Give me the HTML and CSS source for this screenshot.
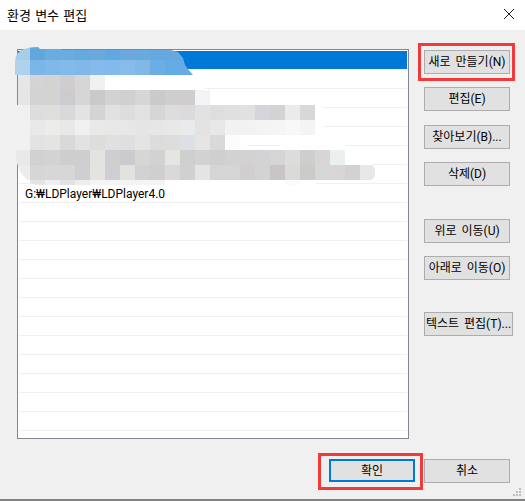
FILE: index.html
```html
<!DOCTYPE html>
<html lang="ko">
<head>
<meta charset="utf-8">
<title>환경 변수 편집</title>
<link rel="stylesheet" href="styles.css">
</head>
<body>
<div class="window">
  <header class="titlebar">
    <span class="title">환경 변수 편집</span>
    <svg class="close" width="10" height="10" viewBox="0 0 10 10"><path d="M0 0L10 10M10 0L0 10" stroke="#1a1a1a" stroke-width="1" fill="none"/></svg>
  </header>
  <div class="content">
    <div class="main">
      <div class="list">
        <div class="row selected"></div>
        <div class="row"></div>
        <div class="row"></div>
        <div class="row"></div>
        <div class="row"></div>
        <div class="row"></div>
        <div class="row"></div>
        <div class="row text-row">G:₩LDPlayer₩LDPlayer4.0</div>
        <div class="row"></div>
        <div class="row"></div>
        <div class="row"></div>
        <div class="row"></div>
        <div class="row"></div>
        <div class="row"></div>
        <div class="row"></div>
        <div class="row"></div>
        <div class="row"></div>
        <div class="row"></div>
        <div class="row"></div>
        <div class="row"></div>
        <div class="row"></div>
      </div>
      <div class="actions">
        <button class="btn highlight-new">새로 만들기(N)</button>
        <button class="btn gap-s">편집(E)</button>
        <button class="btn gap-m">찾아보기(B)...</button>
        <button class="btn gap-s">삭제(D)</button>
        <button class="btn gap-l">위로 이동(U)</button>
        <button class="btn gap-s">아래로 이동(O)</button>
        <button class="btn gap-xl wide">텍스트 편집(T)...</button>
      </div>
    </div>
    <footer class="footer">
      <button class="btn primary">확인</button>
      <button class="btn">취소</button>
    </footer>
  </div>
  <svg class="mosaic" width="525" height="501" viewBox="0 0 525 501" shape-rendering="crispEdges" aria-hidden="true">
    <defs>
      <clipPath id="blob"><path d="M15 75V62Q15 52 24 49Q30 47 38 47L40 49H62V50H171L178 52L183 58L185 65L188 69L193 75Z"/></clipPath>
      <clipPath id="soft"><path d="M15 105H18V75H210V105H330V135H340V150H345V165H372L375 169V176L372 180H300V186H40L30 183L20 172L16 160V153L15 135Z"/></clipPath>
    </defs>
    <g clip-path="url(#blob)">
      <rect x="15" y="47" width="15" height="13" fill="#a8cde9"/><rect x="30" y="47" width="15" height="13" fill="#62a6de"/><rect x="45" y="47" width="15" height="13" fill="#6aabe0"/><rect x="60" y="47" width="15" height="13" fill="#6aabe0"/><rect x="75" y="47" width="15" height="13" fill="#65a9df"/><rect x="90" y="47" width="15" height="13" fill="#6aa9dd"/><rect x="105" y="47" width="15" height="13" fill="#62a7df"/><rect x="120" y="47" width="15" height="13" fill="#6ba9dc"/><rect x="135" y="47" width="15" height="13" fill="#68a9de"/><rect x="150" y="47" width="15" height="13" fill="#66a7dc"/><rect x="165" y="47" width="30" height="13" fill="#68a8dc"/>
      <rect x="15" y="60" width="15" height="15" fill="#b0d2ed"/><rect x="30" y="60" width="15" height="15" fill="#7ab7e8"/><rect x="45" y="60" width="15" height="15" fill="#80b9e9"/><rect x="60" y="60" width="15" height="15" fill="#82bae8"/><rect x="75" y="60" width="15" height="15" fill="#80b9e9"/><rect x="90" y="60" width="15" height="15" fill="#85bbec"/><rect x="105" y="60" width="15" height="15" fill="#82baeb"/><rect x="120" y="60" width="15" height="15" fill="#86bbea"/><rect x="135" y="60" width="15" height="15" fill="#80b8e8"/><rect x="150" y="60" width="15" height="15" fill="#6aaee5"/><rect x="165" y="60" width="30" height="15" fill="#65abe6"/>
    </g>
    <rect x="105" y="75" width="100" height="15" fill="#fff"/>
    <rect x="210" y="90" width="113" height="15" fill="#fff"/>
    <rect x="315" y="105" width="8" height="30" fill="#fff"/>
    <rect x="240" y="135" width="7" height="15" fill="#fff"/>
    <rect x="280" y="135" width="66" height="15" fill="#fff"/>
    <rect x="345" y="150" width="27" height="15" fill="#fff"/>
    <rect x="165" y="180" width="151" height="5" fill="#fff"/>
    <g clip-path="url(#soft)">
      <g><rect x="15" y="75" width="15" height="15" fill="#e6e6e6"/><rect x="30" y="75" width="15" height="15" fill="#d4d4d4"/><rect x="45" y="75" width="15" height="15" fill="#d3d3d1"/><rect x="60" y="75" width="15" height="15" fill="#cfcdcf"/><rect x="75" y="75" width="15" height="15" fill="#d6d6d5"/><rect x="90" y="75" width="15" height="15" fill="#f0f1f3"/></g>
      <g><rect x="15" y="90" width="15" height="15" fill="#e6e6e6"/><rect x="30" y="90" width="15" height="15" fill="#d3d3d3"/><rect x="45" y="90" width="15" height="15" fill="#d3d3d1"/><rect x="60" y="90" width="15" height="15" fill="#cdcbcd"/><rect x="75" y="90" width="15" height="15" fill="#d6d6d6"/><rect x="90" y="90" width="15" height="15" fill="#cacaca"/><rect x="105" y="90" width="15" height="15" fill="#d2d2d1"/><rect x="120" y="90" width="15" height="15" fill="#d0d0d0"/><rect x="135" y="90" width="15" height="15" fill="#d6d6d6"/><rect x="150" y="90" width="15" height="15" fill="#cacaca"/><rect x="165" y="90" width="15" height="15" fill="#cecece"/><rect x="180" y="90" width="15" height="15" fill="#cfcdcd"/><rect x="195" y="90" width="15" height="15" fill="#f3f4f6"/></g>
      <g><rect x="15" y="105" width="15" height="15" fill="#f0f0f0"/><rect x="30" y="105" width="15" height="15" fill="#dddddd"/><rect x="45" y="105" width="15" height="15" fill="#dededc"/><rect x="60" y="105" width="15" height="15" fill="#d9d8da"/><rect x="75" y="105" width="15" height="15" fill="#e3e3e3"/><rect x="90" y="105" width="15" height="15" fill="#d4d4d4"/><rect x="105" y="105" width="15" height="15" fill="#e0e2e1"/><rect x="120" y="105" width="15" height="15" fill="#dddddd"/><rect x="135" y="105" width="15" height="15" fill="#e2e2e2"/><rect x="150" y="105" width="15" height="15" fill="#d6d6d6"/><rect x="165" y="105" width="15" height="15" fill="#dddedc"/><rect x="180" y="105" width="15" height="15" fill="#dcdade"/><rect x="195" y="105" width="15" height="15" fill="#e2e2e3"/><rect x="210" y="105" width="15" height="15" fill="#dedede"/><rect x="225" y="105" width="15" height="15" fill="#e0e0e0"/><rect x="240" y="105" width="15" height="15" fill="#e1e1df"/><rect x="255" y="105" width="15" height="15" fill="#d6d4da"/><rect x="270" y="105" width="15" height="15" fill="#d3d3d3"/><rect x="285" y="105" width="15" height="15" fill="#ebebe9"/><rect x="300" y="105" width="15" height="15" fill="#d8d8d8"/></g>
      <g><rect x="15" y="120" width="15" height="15" fill="#f1f1f1"/><rect x="30" y="120" width="15" height="15" fill="#e8e9eb"/><rect x="45" y="120" width="15" height="15" fill="#ececea"/><rect x="60" y="120" width="15" height="15" fill="#e8e8e9"/><rect x="75" y="120" width="15" height="15" fill="#f0f0f0"/><rect x="90" y="120" width="15" height="15" fill="#e9e9e7"/><rect x="105" y="120" width="15" height="15" fill="#e7e7e7"/><rect x="120" y="120" width="15" height="15" fill="#e7e7e7"/><rect x="135" y="120" width="15" height="15" fill="#e5e5e5"/><rect x="150" y="120" width="15" height="15" fill="#e5e6e8"/><rect x="165" y="120" width="15" height="15" fill="#e8e8e8"/><rect x="180" y="120" width="15" height="15" fill="#eaeaea"/><rect x="195" y="120" width="15" height="15" fill="#e4e2e3"/><rect x="210" y="120" width="15" height="15" fill="#e7e7e7"/><rect x="225" y="120" width="15" height="15" fill="#f1f2f4"/><rect x="240" y="120" width="15" height="15" fill="#f2f2f2"/><rect x="255" y="120" width="15" height="15" fill="#f4f4f4"/><rect x="270" y="120" width="15" height="15" fill="#f5f5f5"/><rect x="285" y="120" width="15" height="15" fill="#f8f8f8"/><rect x="300" y="120" width="15" height="15" fill="#f4f4f4"/></g>
      <g><rect x="15" y="135" width="15" height="15" fill="#f0f2f1"/><rect x="30" y="135" width="15" height="15" fill="#e3e3e3"/><rect x="45" y="135" width="15" height="15" fill="#e4e4e2"/><rect x="60" y="135" width="15" height="15" fill="#dad8da"/><rect x="75" y="135" width="15" height="15" fill="#e2e2e2"/><rect x="90" y="135" width="15" height="15" fill="#dcdedc"/><rect x="105" y="135" width="15" height="15" fill="#e0e0e0"/><rect x="120" y="135" width="15" height="15" fill="#dddfe1"/><rect x="135" y="135" width="15" height="15" fill="#e4e4e4"/><rect x="150" y="135" width="15" height="15" fill="#dcdcdc"/><rect x="165" y="135" width="15" height="15" fill="#dfdddc"/><rect x="180" y="135" width="15" height="15" fill="#dcdfe3"/><rect x="195" y="135" width="15" height="15" fill="#e6e5e2"/><rect x="210" y="135" width="15" height="15" fill="#d8d9db"/><rect x="225" y="135" width="15" height="15" fill="#fcfcfc"/></g>
      <g><rect x="15" y="150" width="15" height="15" fill="#e9e9e9"/><rect x="30" y="150" width="15" height="15" fill="#d1d1d1"/><rect x="45" y="150" width="15" height="15" fill="#d3d3d3"/><rect x="60" y="150" width="15" height="15" fill="#cecece"/><rect x="75" y="150" width="15" height="15" fill="#cecece"/><rect x="90" y="150" width="15" height="15" fill="#e3e3e1"/><rect x="105" y="150" width="15" height="15" fill="#cfcdcf"/><rect x="120" y="150" width="15" height="15" fill="#cbcbcd"/><rect x="135" y="150" width="15" height="15" fill="#d6d6d3"/><rect x="150" y="150" width="15" height="15" fill="#d2d2d2"/><rect x="165" y="150" width="15" height="15" fill="#e4e6e4"/><rect x="180" y="150" width="15" height="15" fill="#cfcfd0"/><rect x="195" y="150" width="15" height="15" fill="#d2d2d2"/><rect x="210" y="150" width="15" height="15" fill="#cfcfcf"/><rect x="225" y="150" width="15" height="15" fill="#d3d1d1"/><rect x="240" y="150" width="15" height="15" fill="#d2d2d3"/><rect x="255" y="150" width="15" height="15" fill="#d3d3d5"/><rect x="270" y="150" width="15" height="15" fill="#d5d5d7"/><rect x="285" y="150" width="15" height="15" fill="#dcdcdb"/><rect x="300" y="150" width="15" height="15" fill="#cecece"/><rect x="315" y="150" width="15" height="15" fill="#d8d5d5"/><rect x="330" y="150" width="15" height="15" fill="#eceff0"/></g>
      <g><rect x="15" y="165" width="15" height="15" fill="#ececec"/><rect x="30" y="165" width="15" height="15" fill="#d6d6d6"/><rect x="45" y="165" width="15" height="15" fill="#d7d7d7"/><rect x="60" y="165" width="15" height="15" fill="#d7d7d7"/><rect x="75" y="165" width="15" height="15" fill="#d0ced0"/><rect x="90" y="165" width="15" height="15" fill="#e3e3e1"/><rect x="105" y="165" width="15" height="15" fill="#cfcfd3"/><rect x="120" y="165" width="15" height="15" fill="#e2e2df"/><rect x="135" y="165" width="15" height="15" fill="#d0d2d3"/><rect x="150" y="165" width="15" height="15" fill="#cfcfcf"/><rect x="165" y="165" width="15" height="15" fill="#d9d9d9"/><rect x="180" y="165" width="15" height="15" fill="#d1cfcf"/><rect x="195" y="165" width="15" height="15" fill="#e2e5e3"/><rect x="210" y="165" width="15" height="15" fill="#d5d5d5"/><rect x="225" y="165" width="15" height="15" fill="#d5d5d5"/><rect x="240" y="165" width="15" height="15" fill="#d0cece"/><rect x="255" y="165" width="15" height="15" fill="#d3d3d3"/><rect x="270" y="165" width="15" height="15" fill="#c9c5c7"/><rect x="285" y="165" width="15" height="15" fill="#d9dbd9"/><rect x="300" y="165" width="15" height="15" fill="#cccbc8"/><rect x="315" y="165" width="15" height="15" fill="#d7d7d7"/><rect x="330" y="165" width="15" height="15" fill="#d9d5d7"/><rect x="345" y="165" width="15" height="15" fill="#d2d2d2"/><rect x="360" y="165" width="15" height="15" fill="#e8e8ea"/></g>
      <g><rect x="30" y="180" width="15" height="5" fill="#e4e4e4"/><rect x="45" y="180" width="15" height="5" fill="#f0f0f0"/><rect x="60" y="180" width="15" height="5" fill="#e2e2e2"/><rect x="75" y="180" width="15" height="5" fill="#ededed"/><rect x="90" y="180" width="75" height="5" fill="#f4f4f4"/><rect x="285" y="180" width="15" height="5" fill="#fbfbfb"/></g>
    </g>
  </svg>
  <svg class="grip" width="9" height="9" viewBox="0 0 9 9" aria-hidden="true"><path d="M6 0h2v2H6zM3 3h2v2H3zM6 3h2v2H6zM0 6h2v2H0zM3 6h2v2H3zM6 6h2v2H6z" fill="#bdbdbd"/></svg>
</div>
</body>
</html>
```
FILE: styles.css
```css
* { box-sizing: border-box; }
html, body { margin: 0; padding: 0; }
body {
  width: 525px;
  height: 501px;
  overflow: hidden;
  font-family: Roboto, "Noto Sans CJK KR", sans-serif;
  font-size: 12px;
  color: #000;
}
.window {
  position: relative;
  width: 525px;
  height: 501px;
  display: flex;
  flex-direction: column;
  background: #f0f0f0;
  border-bottom: 2px solid #7f7f7f;
}
.titlebar {
  height: 30px;
  flex: none;
  display: flex;
  align-items: center;
  justify-content: space-between;
  padding: 0 11px 2px 7px;
  background: #fff;
}
.title { font-size: 13px; word-spacing: 1px; }
.close { display: block; }
.content { flex: 1; display: flex; flex-direction: column; }
.main { display: flex; padding: 19px 0 0 17px; }
.list {
  width: 392px;
  height: 390px;
  padding: 1px 1px 0 0;
  overflow: hidden;
  flex: none;
  background: #fff;
  border: 1px solid #828790;
}
.row {
  height: 19px;
  flex: none;
  margin-left: 1px;
  padding-left: 6px;
  line-height: 20px;
  border-bottom: 1px solid #f0f0f0;
}
.row.selected {
  margin-left: 0;
  background: #0078d7;
  background-clip: padding-box;
  border-bottom-color: #fff;
}
.actions {
  display: flex;
  flex-direction: column;
  align-items: flex-start;
  padding: 1px 0 0 15px;
}
.btn {
  position: relative;
  width: 86px;
  height: 24px;
  padding: 0 0 3px;
  flex: none;
  font: inherit;
  word-spacing: 2px;
  color: #000;
  white-space: nowrap;
  background: #e1e1e1;
  border: 1px solid #adadad;
  border-radius: 0;
}
.gap-s { margin-top: 13px; }
.gap-m { margin-top: 14px; }
.gap-l { margin-top: 33px; }
.gap-xl { margin-top: 32px; }
.wide { width: 89px; }
.footer {
  display: flex;
  justify-content: flex-end;
  align-items: flex-start;
  gap: 9px;
  padding: 20px 15px 0 0;
}
.primary {
  height: 23px;
  padding-bottom: 2px;
  border: 2px solid #0078d7;
}
.highlight-new::after,
.primary::after {
  content: "";
  position: absolute;
  border: 3px solid #f33a3a;
  pointer-events: none;
}
.highlight-new::after { inset: -8px -6px -8px -7px; }
.primary::after { inset: -8px -10px -10px -13px; }
.mosaic { position: absolute; left: 0; top: 0; pointer-events: none; }
.grip { position: absolute; right: 3px; bottom: 2px; }
```
